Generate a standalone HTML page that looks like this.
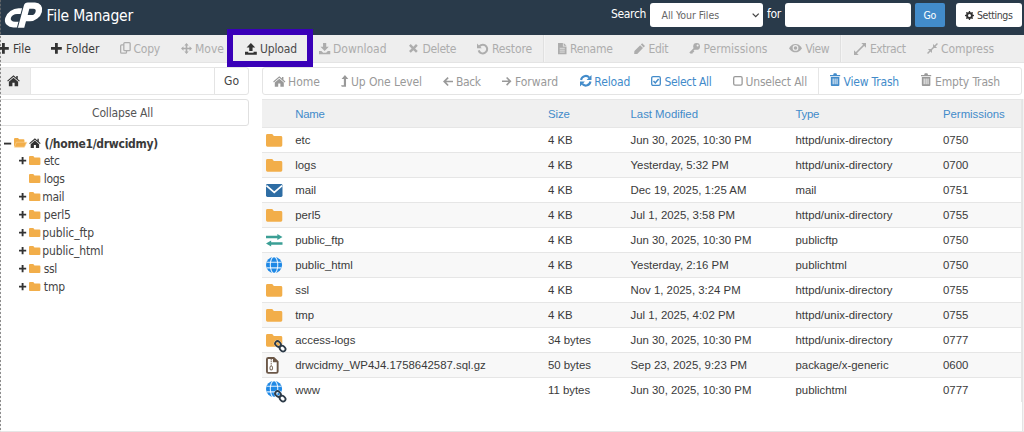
<!DOCTYPE html>
<html lang="en">
<head>
<meta charset="utf-8">
<title>File Manager</title>
<style>
*{box-sizing:border-box;margin:0;padding:0}
html,body{width:1024px;height:432px;overflow:hidden;background:#fff}
body{position:relative;font-family:"Liberation Sans",sans-serif;font-size:12px;color:#333}
.b{position:absolute}
.t{position:absolute;white-space:nowrap;line-height:16px;height:16px}
svg{position:absolute;overflow:visible}
#hdr{left:0;top:0;width:1024px;height:34.5px;background:#293a4a}
#tb{left:0;top:34.5px;width:1024px;height:28px;background:#eee;border-bottom:1px solid #e4e4e4}
.sep{position:absolute;top:35px;height:27px;width:1px;background:#e0e0e0;border-right:1px solid #f4f4f4;width:2px}
.row{position:absolute;left:261.5px;width:759.5px;height:25px;border-top:1px solid #e6e6e6}
.odd{background:#fff}
.even{background:#f8f8f8}
</style>
</head>
<body>
<div id="hdr" class="b"></div>
<div id="tb" class="b"></div>
<div class="sep" style="left:543px"></div>
<div class="sep" style="left:840px"></div>
<div class="b" style="left:650px;top:3px;width:113px;height:24px;background:#fff;border-radius:3px"></div>
<div class="b" style="left:785px;top:3px;width:126px;height:24px;background:#fff;border-radius:3px"></div>
<div class="b" style="left:914.5px;top:3px;width:30px;height:24px;background:#428bca;border-radius:2px"></div>
<div class="b" style="left:955.5px;top:3px;width:66px;height:24px;background:#fff;border-radius:3px"></div>
<div class="b" style="left:227px;top:29px;width:86.4px;height:37.8px;border:6.5px solid #3a00b8"></div>
<div class="b" style="left:0;top:67.3px;width:30.5px;height:27.4px;background:#eee;border:1px solid #e6e6e6;border-left:0"></div>
<div class="b" style="left:30px;top:67.3px;width:184.5px;height:27.4px;background:#fff;border:1px solid #e6e6e6"></div>
<div class="b" style="left:214px;top:67.3px;width:35px;height:27.4px;background:#fff;border:1px solid #e4e4e4;border-radius:0 3px 3px 0"></div>
<div class="b" style="left:-2px;top:98.5px;width:251px;height:27px;background:#fff;border:1px solid #e0e0e0;border-radius:3px"></div>
<div class="b" style="left:261.5px;top:67px;width:760.3px;height:28.4px;background:#fff;border:1px solid #e4e4e4;border-radius:3px"></div>
<div class="b" style="left:817.5px;top:68px;width:1px;height:26.4px;background:#e6e6e6"></div>
<div class="b" style="left:261.5px;top:99px;width:760px;height:333px;background:#fff;border:1px solid #e6e6e6"></div>
<div class="b" style="left:261.5px;top:99.5px;width:759.5px;height:27.5px;background:#f0f0f0"></div>
<div class="row odd" style="top:126.7px"></div>
<div class="row even" style="top:151.7px"></div>
<div class="row odd" style="top:176.7px"></div>
<div class="row even" style="top:201.7px"></div>
<div class="row odd" style="top:226.7px"></div>
<div class="row even" style="top:251.7px"></div>
<div class="row odd" style="top:276.7px"></div>
<div class="row even" style="top:301.7px"></div>
<div class="row odd" style="top:326.7px"></div>
<div class="row even" style="top:351.7px"></div>
<div class="row odd" style="top:376.7px"></div>

<div class="b" style="left:262px;top:401.7px;width:759.5px;height:29px;background:#fff"></div>
<div class="b" style="left:1021.5px;top:99px;width:2.5px;height:333px;background:#f3f3f3;border-left:1px solid #e4e4e4"></div>
<div class="b" style="left:0;top:431px;width:1024px;height:1px;background:#e6e6e6"></div>
<div class="b" style="left:0;top:0;width:1px;height:432px;background:repeating-linear-gradient(to bottom,rgba(112,112,112,.8) 0,rgba(112,112,112,.8) 2px,rgba(160,160,160,.12) 2px,rgba(160,160,160,.12) 4px)"></div>
<span class="t" style="left:46.5px;top:8.2px;font-family:'DejaVu Sans Condensed','Liberation Sans',sans-serif;font-size:15.5px;color:#fff;letter-spacing:-0.19px;">File Manager</span>
<span class="t" style="left:611.0px;top:5.5px;font-family:'DejaVu Sans Condensed','Liberation Sans',sans-serif;font-size:12px;color:#fff;letter-spacing:-0.35px;">Search</span>
<span class="t" style="left:661.5px;top:7.0px;font-family:'DejaVu Sans Condensed','Liberation Sans',sans-serif;font-size:10.5px;color:#666;letter-spacing:-0.06px;">All Your Files</span>
<span class="t" style="left:767.0px;top:5.5px;font-family:'DejaVu Sans Condensed','Liberation Sans',sans-serif;font-size:12px;color:#fff;letter-spacing:-0.28px;">for</span>
<span class="t" style="left:923.5px;top:7.0px;font-family:'DejaVu Sans Condensed','Liberation Sans',sans-serif;font-size:10.5px;color:#fff;letter-spacing:-0.30px;">Go</span>
<span class="t" style="left:977.0px;top:7.0px;font-family:'DejaVu Sans Condensed','Liberation Sans',sans-serif;font-size:10.5px;color:#444;letter-spacing:-0.41px;">Settings</span>
<span class="t" style="left:13.0px;top:40.8px;font-family:'DejaVu Sans Condensed','Liberation Sans',sans-serif;font-size:12px;color:#3b3b3b;letter-spacing:0.00px;">File</span>
<span class="t" style="left:66.0px;top:40.8px;font-family:'DejaVu Sans Condensed','Liberation Sans',sans-serif;font-size:12px;color:#3b3b3b;letter-spacing:0.03px;">Folder</span>
<span class="t" style="left:133.5px;top:40.8px;font-family:'DejaVu Sans Condensed','Liberation Sans',sans-serif;font-size:12px;color:#adadad;letter-spacing:-0.22px;">Copy</span>
<span class="t" style="left:195.0px;top:40.8px;font-family:'DejaVu Sans Condensed','Liberation Sans',sans-serif;font-size:12px;color:#adadad;letter-spacing:0.01px;">Move</span>
<span class="t" style="left:260.0px;top:40.8px;font-family:'DejaVu Sans Condensed','Liberation Sans',sans-serif;font-size:12px;color:#4a4a4a;letter-spacing:-0.14px;">Upload</span>
<span class="t" style="left:333.0px;top:40.8px;font-family:'DejaVu Sans Condensed','Liberation Sans',sans-serif;font-size:12px;color:#adadad;letter-spacing:-0.02px;">Download</span>
<span class="t" style="left:422.5px;top:40.8px;font-family:'DejaVu Sans Condensed','Liberation Sans',sans-serif;font-size:12px;color:#adadad;letter-spacing:-0.33px;">Delete</span>
<span class="t" style="left:492.0px;top:40.8px;font-family:'DejaVu Sans Condensed','Liberation Sans',sans-serif;font-size:12px;color:#adadad;letter-spacing:-0.13px;">Restore</span>
<span class="t" style="left:570.0px;top:40.8px;font-family:'DejaVu Sans Condensed','Liberation Sans',sans-serif;font-size:12px;color:#adadad;letter-spacing:-0.29px;">Rename</span>
<span class="t" style="left:648.5px;top:40.8px;font-family:'DejaVu Sans Condensed','Liberation Sans',sans-serif;font-size:12px;color:#adadad;letter-spacing:-0.35px;">Edit</span>
<span class="t" style="left:703.5px;top:40.8px;font-family:'DejaVu Sans Condensed','Liberation Sans',sans-serif;font-size:12px;color:#adadad;letter-spacing:0.02px;">Permissions</span>
<span class="t" style="left:805.5px;top:40.8px;font-family:'DejaVu Sans Condensed','Liberation Sans',sans-serif;font-size:12px;color:#adadad;letter-spacing:-0.52px;">View</span>
<span class="t" style="left:870.0px;top:40.8px;font-family:'DejaVu Sans Condensed','Liberation Sans',sans-serif;font-size:12px;color:#adadad;letter-spacing:-0.45px;">Extract</span>
<span class="t" style="left:941.0px;top:40.8px;font-family:'DejaVu Sans Condensed','Liberation Sans',sans-serif;font-size:12px;color:#adadad;letter-spacing:-0.07px;">Compress</span>
<span class="t" style="left:288.0px;top:73.5px;font-family:'DejaVu Sans Condensed','Liberation Sans',sans-serif;font-size:12px;color:#999;letter-spacing:0.03px;">Home</span>
<span class="t" style="left:351.0px;top:73.5px;font-family:'DejaVu Sans Condensed','Liberation Sans',sans-serif;font-size:12px;color:#999;letter-spacing:-0.09px;">Up One Level</span>
<span class="t" style="left:456.0px;top:73.5px;font-family:'DejaVu Sans Condensed','Liberation Sans',sans-serif;font-size:12px;color:#999;letter-spacing:-0.43px;">Back</span>
<span class="t" style="left:515.0px;top:73.5px;font-family:'DejaVu Sans Condensed','Liberation Sans',sans-serif;font-size:12px;color:#999;letter-spacing:-0.05px;">Forward</span>
<span class="t" style="left:594.3px;top:73.5px;font-family:'DejaVu Sans Condensed','Liberation Sans',sans-serif;font-size:12px;color:#428bca;letter-spacing:-0.13px;">Reload</span>
<span class="t" style="left:664.5px;top:73.5px;font-family:'DejaVu Sans Condensed','Liberation Sans',sans-serif;font-size:12px;color:#428bca;letter-spacing:-0.32px;">Select All</span>
<span class="t" style="left:745.5px;top:73.5px;font-family:'DejaVu Sans Condensed','Liberation Sans',sans-serif;font-size:12px;color:#999;letter-spacing:-0.18px;">Unselect All</span>
<span class="t" style="left:843.5px;top:73.5px;font-family:'DejaVu Sans Condensed','Liberation Sans',sans-serif;font-size:12px;color:#428bca;letter-spacing:-0.19px;">View Trash</span>
<span class="t" style="left:935.0px;top:73.5px;font-family:'DejaVu Sans Condensed','Liberation Sans',sans-serif;font-size:12px;color:#999;letter-spacing:-0.14px;">Empty Trash</span>
<span class="t" style="left:224.0px;top:72.6px;font-family:'DejaVu Sans Condensed','Liberation Sans',sans-serif;font-size:12px;color:#444;letter-spacing:0.01px;">Go</span>
<span class="t" style="left:92.0px;top:105.0px;font-family:'DejaVu Sans Condensed','Liberation Sans',sans-serif;font-size:12px;color:#555;letter-spacing:-0.14px;">Collapse All</span>
<span class="t" style="left:44.5px;top:135.6px;font-family:'DejaVu Sans Condensed','Liberation Sans',sans-serif;font-size:12px;color:#3a3a3a;font-weight:700;letter-spacing:-0.27px;">(/home1/drwcidmy)</span>
<span class="t" style="left:43.7px;top:152.8px;font-family:'DejaVu Sans Condensed','Liberation Sans',sans-serif;font-size:12px;color:#444;letter-spacing:-0.30px;">etc</span>
<span class="t" style="left:43.7px;top:170.8px;font-family:'DejaVu Sans Condensed','Liberation Sans',sans-serif;font-size:12px;color:#444;letter-spacing:-0.27px;">logs</span>
<span class="t" style="left:42.2px;top:188.8px;font-family:'DejaVu Sans Condensed','Liberation Sans',sans-serif;font-size:12px;color:#444;letter-spacing:-0.26px;">mail</span>
<span class="t" style="left:43.7px;top:206.8px;font-family:'DejaVu Sans Condensed','Liberation Sans',sans-serif;font-size:12px;color:#444;letter-spacing:-0.14px;">perl5</span>
<span class="t" style="left:42.2px;top:224.8px;font-family:'DejaVu Sans Condensed','Liberation Sans',sans-serif;font-size:12px;color:#444;letter-spacing:-0.08px;">public_ftp</span>
<span class="t" style="left:42.2px;top:242.8px;font-family:'DejaVu Sans Condensed','Liberation Sans',sans-serif;font-size:12px;color:#444;letter-spacing:-0.12px;">public_html</span>
<span class="t" style="left:43.7px;top:260.8px;font-family:'DejaVu Sans Condensed','Liberation Sans',sans-serif;font-size:12px;color:#444;letter-spacing:-0.32px;">ssl</span>
<span class="t" style="left:43.7px;top:278.8px;font-family:'DejaVu Sans Condensed','Liberation Sans',sans-serif;font-size:12px;color:#444;letter-spacing:-0.04px;">tmp</span>
<span class="t" style="left:295.2px;top:106.0px;font-family:'Liberation Sans',sans-serif;font-size:11.4px;color:#428bca;letter-spacing:-0.22px;">Name</span>
<span class="t" style="left:548.1px;top:106.0px;font-family:'Liberation Sans',sans-serif;font-size:11.4px;color:#428bca;letter-spacing:-0.17px;">Size</span>
<span class="t" style="left:630.5px;top:106.0px;font-family:'Liberation Sans',sans-serif;font-size:11.4px;color:#428bca;letter-spacing:-0.02px;">Last Modified</span>
<span class="t" style="left:795.5px;top:106.0px;font-family:'Liberation Sans',sans-serif;font-size:11.4px;color:#428bca;letter-spacing:-0.30px;">Type</span>
<span class="t" style="left:943.0px;top:106.0px;font-family:'Liberation Sans',sans-serif;font-size:11.4px;color:#428bca;letter-spacing:-0.03px;">Permissions</span>
<span class="t" style="left:295.2px;top:131.8px;font-family:'Liberation Sans',sans-serif;font-size:11.4px;color:#3a3a3a;">etc</span>
<span class="t" style="left:547.9px;top:131.8px;font-family:'Liberation Sans',sans-serif;font-size:11.4px;color:#3a3a3a;">4 KB</span>
<span class="t" style="left:630.5px;top:131.8px;font-family:'Liberation Sans',sans-serif;font-size:11.4px;color:#3a3a3a;">Jun 30, 2025, 10:30 PM</span>
<span class="t" style="left:795.5px;top:131.8px;font-family:'Liberation Sans',sans-serif;font-size:11.4px;color:#3a3a3a;">httpd/unix-directory</span>
<span class="t" style="left:943.0px;top:131.8px;font-family:'Liberation Sans',sans-serif;font-size:11.4px;color:#3a3a3a;">0750</span>
<span class="t" style="left:295.2px;top:156.8px;font-family:'Liberation Sans',sans-serif;font-size:11.4px;color:#3a3a3a;">logs</span>
<span class="t" style="left:547.9px;top:156.8px;font-family:'Liberation Sans',sans-serif;font-size:11.4px;color:#3a3a3a;">4 KB</span>
<span class="t" style="left:630.5px;top:156.8px;font-family:'Liberation Sans',sans-serif;font-size:11.4px;color:#3a3a3a;">Yesterday, 5:32 PM</span>
<span class="t" style="left:795.5px;top:156.8px;font-family:'Liberation Sans',sans-serif;font-size:11.4px;color:#3a3a3a;">httpd/unix-directory</span>
<span class="t" style="left:943.0px;top:156.8px;font-family:'Liberation Sans',sans-serif;font-size:11.4px;color:#3a3a3a;">0700</span>
<span class="t" style="left:295.2px;top:181.8px;font-family:'Liberation Sans',sans-serif;font-size:11.4px;color:#3a3a3a;">mail</span>
<span class="t" style="left:547.9px;top:181.8px;font-family:'Liberation Sans',sans-serif;font-size:11.4px;color:#3a3a3a;">4 KB</span>
<span class="t" style="left:630.5px;top:181.8px;font-family:'Liberation Sans',sans-serif;font-size:11.4px;color:#3a3a3a;">Dec 19, 2025, 1:25 AM</span>
<span class="t" style="left:795.5px;top:181.8px;font-family:'Liberation Sans',sans-serif;font-size:11.4px;color:#3a3a3a;">mail</span>
<span class="t" style="left:943.0px;top:181.8px;font-family:'Liberation Sans',sans-serif;font-size:11.4px;color:#3a3a3a;">0751</span>
<span class="t" style="left:295.2px;top:206.8px;font-family:'Liberation Sans',sans-serif;font-size:11.4px;color:#3a3a3a;">perl5</span>
<span class="t" style="left:547.9px;top:206.8px;font-family:'Liberation Sans',sans-serif;font-size:11.4px;color:#3a3a3a;">4 KB</span>
<span class="t" style="left:630.5px;top:206.8px;font-family:'Liberation Sans',sans-serif;font-size:11.4px;color:#3a3a3a;">Jul 1, 2025, 3:58 PM</span>
<span class="t" style="left:795.5px;top:206.8px;font-family:'Liberation Sans',sans-serif;font-size:11.4px;color:#3a3a3a;">httpd/unix-directory</span>
<span class="t" style="left:943.0px;top:206.8px;font-family:'Liberation Sans',sans-serif;font-size:11.4px;color:#3a3a3a;">0755</span>
<span class="t" style="left:295.2px;top:231.8px;font-family:'Liberation Sans',sans-serif;font-size:11.4px;color:#3a3a3a;">public_ftp</span>
<span class="t" style="left:547.9px;top:231.8px;font-family:'Liberation Sans',sans-serif;font-size:11.4px;color:#3a3a3a;">4 KB</span>
<span class="t" style="left:630.5px;top:231.8px;font-family:'Liberation Sans',sans-serif;font-size:11.4px;color:#3a3a3a;">Jun 30, 2025, 10:30 PM</span>
<span class="t" style="left:795.5px;top:231.8px;font-family:'Liberation Sans',sans-serif;font-size:11.4px;color:#3a3a3a;">publicftp</span>
<span class="t" style="left:943.0px;top:231.8px;font-family:'Liberation Sans',sans-serif;font-size:11.4px;color:#3a3a3a;">0750</span>
<span class="t" style="left:295.2px;top:256.8px;font-family:'Liberation Sans',sans-serif;font-size:11.4px;color:#3a3a3a;">public_html</span>
<span class="t" style="left:547.9px;top:256.8px;font-family:'Liberation Sans',sans-serif;font-size:11.4px;color:#3a3a3a;">4 KB</span>
<span class="t" style="left:630.5px;top:256.8px;font-family:'Liberation Sans',sans-serif;font-size:11.4px;color:#3a3a3a;">Yesterday, 2:16 PM</span>
<span class="t" style="left:795.5px;top:256.8px;font-family:'Liberation Sans',sans-serif;font-size:11.4px;color:#3a3a3a;">publichtml</span>
<span class="t" style="left:943.0px;top:256.8px;font-family:'Liberation Sans',sans-serif;font-size:11.4px;color:#3a3a3a;">0750</span>
<span class="t" style="left:295.2px;top:281.8px;font-family:'Liberation Sans',sans-serif;font-size:11.4px;color:#3a3a3a;">ssl</span>
<span class="t" style="left:547.9px;top:281.8px;font-family:'Liberation Sans',sans-serif;font-size:11.4px;color:#3a3a3a;">4 KB</span>
<span class="t" style="left:630.5px;top:281.8px;font-family:'Liberation Sans',sans-serif;font-size:11.4px;color:#3a3a3a;">Nov 1, 2025, 3:24 PM</span>
<span class="t" style="left:795.5px;top:281.8px;font-family:'Liberation Sans',sans-serif;font-size:11.4px;color:#3a3a3a;">httpd/unix-directory</span>
<span class="t" style="left:943.0px;top:281.8px;font-family:'Liberation Sans',sans-serif;font-size:11.4px;color:#3a3a3a;">0755</span>
<span class="t" style="left:295.2px;top:306.8px;font-family:'Liberation Sans',sans-serif;font-size:11.4px;color:#3a3a3a;">tmp</span>
<span class="t" style="left:547.9px;top:306.8px;font-family:'Liberation Sans',sans-serif;font-size:11.4px;color:#3a3a3a;">4 KB</span>
<span class="t" style="left:630.5px;top:306.8px;font-family:'Liberation Sans',sans-serif;font-size:11.4px;color:#3a3a3a;">Jul 1, 2025, 4:02 PM</span>
<span class="t" style="left:795.5px;top:306.8px;font-family:'Liberation Sans',sans-serif;font-size:11.4px;color:#3a3a3a;">httpd/unix-directory</span>
<span class="t" style="left:943.0px;top:306.8px;font-family:'Liberation Sans',sans-serif;font-size:11.4px;color:#3a3a3a;">0755</span>
<span class="t" style="left:295.2px;top:331.8px;font-family:'Liberation Sans',sans-serif;font-size:11.4px;color:#3a3a3a;">access-logs</span>
<span class="t" style="left:547.9px;top:331.8px;font-family:'Liberation Sans',sans-serif;font-size:11.4px;color:#3a3a3a;">34 bytes</span>
<span class="t" style="left:630.5px;top:331.8px;font-family:'Liberation Sans',sans-serif;font-size:11.4px;color:#3a3a3a;">Jun 30, 2025, 10:30 PM</span>
<span class="t" style="left:795.5px;top:331.8px;font-family:'Liberation Sans',sans-serif;font-size:11.4px;color:#3a3a3a;">httpd/unix-directory</span>
<span class="t" style="left:943.0px;top:331.8px;font-family:'Liberation Sans',sans-serif;font-size:11.4px;color:#3a3a3a;">0777</span>
<span class="t" style="left:295.2px;top:356.8px;font-family:'Liberation Sans',sans-serif;font-size:11.4px;color:#3a3a3a;">drwcidmy_WP4J4.1758642587.sql.gz</span>
<span class="t" style="left:547.9px;top:356.8px;font-family:'Liberation Sans',sans-serif;font-size:11.4px;color:#3a3a3a;">50 bytes</span>
<span class="t" style="left:630.5px;top:356.8px;font-family:'Liberation Sans',sans-serif;font-size:11.4px;color:#3a3a3a;">Sep 23, 2025, 9:23 PM</span>
<span class="t" style="left:795.5px;top:356.8px;font-family:'Liberation Sans',sans-serif;font-size:11.4px;color:#3a3a3a;">package/x-generic</span>
<span class="t" style="left:943.0px;top:356.8px;font-family:'Liberation Sans',sans-serif;font-size:11.4px;color:#3a3a3a;">0600</span>
<span class="t" style="left:295.2px;top:381.8px;font-family:'Liberation Sans',sans-serif;font-size:11.4px;color:#3a3a3a;">www</span>
<span class="t" style="left:547.9px;top:381.8px;font-family:'Liberation Sans',sans-serif;font-size:11.4px;color:#3a3a3a;">11 bytes</span>
<span class="t" style="left:630.5px;top:381.8px;font-family:'Liberation Sans',sans-serif;font-size:11.4px;color:#3a3a3a;">Jun 30, 2025, 10:30 PM</span>
<span class="t" style="left:795.5px;top:381.8px;font-family:'Liberation Sans',sans-serif;font-size:11.4px;color:#3a3a3a;">publichtml</span>
<span class="t" style="left:943.0px;top:381.8px;font-family:'Liberation Sans',sans-serif;font-size:11.4px;color:#3a3a3a;">0777</span>
<svg style="left:0;top:0" width="64" height="36" viewBox="0 0 768 432"><g fill="none" stroke-linejoin="round" transform="translate(58 0) skewX(-15)">
<path d="M256 134 H192 A96 81 0 0 0 192 296 H248" stroke="#fff" stroke-width="68"/>
<path d="M284 332 V68 H370 A75 75 0 0 1 370 218 H318" stroke="#293a4a" stroke-width="102"/>
<path d="M284 332 V68 H370 A75 75 0 0 1 370 218 H318" stroke="#fff" stroke-width="76"/>
</g></svg>
<svg style="left:752.00px;top:12.69px" width="7.40" height="4.62" viewBox="0 0 8 5"><path d="M0.7 0.7 L4 4 L7.3 0.7" fill="none" stroke="#444" stroke-width="1.4"/></svg>
<svg style="left:964.80px;top:11.00px" width="9.00" height="9.00" viewBox="0 0 12 12"><path d="M11.97 5.41 L11.97 6.59 L10.31 7.31 L9.97 8.12 L10.64 9.81 L9.81 10.64 L8.12 9.97 L7.31 10.31 L6.59 11.97 L5.41 11.97 L4.69 10.31 L3.88 9.97 L2.19 10.64 L1.36 9.81 L2.03 8.12 L1.69 7.31 L0.03 6.59 L0.03 5.41 L1.69 4.69 L2.03 3.88 L1.36 2.19 L2.19 1.36 L3.88 2.03 L4.69 1.69 L5.41 0.03 L6.59 0.03 L7.31 1.69 L8.12 2.03 L9.81 1.36 L10.64 2.19 L9.97 3.88 L10.31 4.69Z" fill="#333" /><circle cx="6" cy="6" r="2" fill="#fff"/></svg>
<svg style="left:-1.60px;top:43.20px" width="10.80" height="10.80" viewBox="0 0 10 10"><path d="M3.7 0h2.6v3.7H10v2.6H6.3V10H3.7V6.3H0V3.7h3.7z" fill="#333" /></svg>
<svg style="left:51.40px;top:43.20px" width="10.80" height="10.80" viewBox="0 0 10 10"><path d="M3.7 0h2.6v3.7H10v2.6H6.3V10H3.7V6.3H0V3.7h3.7z" fill="#333" /></svg>
<svg style="left:120.00px;top:42.41px" width="10.80" height="11.78" viewBox="0 0 11 12"><rect x="0.65" y="3" width="6" height="8.35" rx="1" fill="none" stroke="#adadad" stroke-width="1.3"/><rect x="3.9" y="0.65" width="6.45" height="8.2" rx="1" fill="#eee" stroke="#adadad" stroke-width="1.3"/></svg>
<svg style="left:181.00px;top:43.00px" width="11.00" height="11.00" viewBox="0 0 12 12"><path d="M6 0 L8.4 2.7 H6.9 V5.1 H9.3 V3.6 L12 6 L9.3 8.4 V6.9 H6.9 V9.3 H8.4 L6 12 L3.6 9.3 H5.1 V6.9 H2.7 V8.4 L0 6 L2.7 3.6 V5.1 H5.1 V2.7 H3.6 Z" fill="#adadad" /></svg>
<svg style="left:244.70px;top:42.60px" width="11.80" height="11.80" viewBox="0 0 12 12"><path d="M6 0 L10.4 4.6 H7.7 V8.2 H4.3 V4.6 H1.6 Z M0 8.8 H3.3 V9.9 H8.7 V8.8 H12 V12 H0 Z" fill="#333" /></svg>
<svg style="left:318.75px;top:42.88px" width="11.25" height="11.25" viewBox="0 0 12 12"><path d="M4.3 0 H7.7 V3.9 H10.4 L6 8.6 L1.6 3.9 H4.3 Z M0 8.6 H2.6 L4.4 10.4 H7.6 L9.4 8.6 H12 V12 H0 Z" fill="#adadad" /></svg>
<svg style="left:408.75px;top:44.12px" width="8.75" height="8.75" viewBox="0 0 10 10"><path d="M2 0 L5 3 L8 0 L10 2 L7 5 L10 8 L8 10 L5 7 L2 10 L0 8 L3 5 L0 2 Z" fill="#adadad" /></svg>
<svg style="left:477.00px;top:42.50px" width="11.60" height="11.60" viewBox="0 0 12 12"><path d="M2.6 3.4 A4.5 4.5 0 1 1 1.7 7.6" fill="none" stroke="#adadad" stroke-width="2.1"/><path d="M0 0.4 V5.4 H5 Z" fill="#adadad" /></svg>
<svg style="left:557.50px;top:42.83px" width="8.50" height="11.33" viewBox="0 0 9 12"><path d="M0 0 H5.2 V3.8 H9 V12 H0 Z M6 0 L9 3 H6 Z" fill="#adadad" /><path d="M1.8 5.6H7.2M1.8 7.6H7.2M1.8 9.6H7.2" stroke="#eee" stroke-width="0.8"/></svg>
<svg style="left:633.75px;top:42.88px" width="11.25" height="11.25" viewBox="0 0 12 12"><path d="M8.7 0.3 L11.7 3.3 L10.3 4.7 L7.3 1.7 Z M6.6 2.4 L9.6 5.4 L3.4 11.6 L0.2 11.8 L0.4 8.6 Z" fill="#adadad" /></svg>
<svg style="left:689.00px;top:43.00px" width="11.00" height="11.00" viewBox="0 0 12 12"><circle cx="8.3" cy="3.7" r="3.7" fill="#adadad"/><circle cx="9.4" cy="2.6" r="1.1" fill="#eee"/><path d="M6.2 5.8 L1 11 M2.2 9.6 L3.8 11.2 M3.8 8.2 L5.2 9.6" stroke="#adadad" stroke-width="1.9" fill="none"/></svg>
<svg style="left:789.00px;top:44.32px" width="13.00" height="8.36" viewBox="0 0 14 9"><path d="M0 4.5 C2.2 1 4.6 0 7 0 S11.8 1 14 4.5 C11.8 8 9.4 9 7 9 S2.2 8 0 4.5Z" fill="#adadad" /><circle cx="7" cy="4.3" r="3.1" fill="#eee"/><circle cx="7" cy="4.3" r="1.9" fill="#adadad"/></svg>
<svg style="left:854.00px;top:42.50px" width="12.00" height="12.00" viewBox="0 0 12 12"><path d="M2 10 L10 2" stroke="#adadad" stroke-width="1.7" fill="none"/><path d="M7.3 0 H12 V4.7 Z M0 7.3 V12 H4.7 Z" fill="#adadad" /></svg>
<svg style="left:927.00px;top:43.00px" width="11.00" height="11.00" viewBox="0 0 12 12"><path d="M0.6 11.4 L11.4 0.6" stroke="#adadad" stroke-width="1.6" fill="none"/><path d="M6.6 5.4 V1 L11 5.4 Z M5.4 6.6 V11 L1 6.6 Z" fill="#adadad" /></svg>
<svg style="left:272.60px;top:75.60px" width="12.60" height="10.80" viewBox="0 0 14 12"><path d="M7 0.4 L0.2 6.2 L1 7.1 L7 2 L13 7.1 L13.8 6.2 L11.6 4.3 V1 H10 V2.9 Z M7 3 L2 7.3 V12 H5.8 V8.4 H8.2 V12 H12 V7.3 Z" fill="#999" /></svg>
<svg style="left:341.00px;top:75.28px" width="7.30" height="11.84" viewBox="0 0 7.4 12"><path d="M4 0 L7.4 4.1 H5.1 V12 H0.8 L0 10.3 H2.9 V4.1 H0.6 Z" fill="#999" /></svg>
<svg style="left:442.50px;top:76.95px" width="10.00" height="9.09" viewBox="0 0 11 10"><path d="M5 0 L6.3 1.3 L3.5 4.1 H11 V5.9 H3.5 L6.3 8.7 L5 10 L0 5 Z" fill="#999" /></svg>
<svg style="left:502.00px;top:77.18px" width="9.50" height="8.64" viewBox="0 0 11 10"><path d="M6 0 L4.7 1.3 L7.5 4.1 H0 V5.9 H7.5 L4.7 8.7 L6 10 L11 5 Z" fill="#999" /></svg>
<svg style="left:579.50px;top:75.45px" width="11.50" height="11.50" viewBox="0 0 12 12"><path d="M1.1 5.2 A5 5 0 0 1 9.6 2.5 M10.9 6.8 A5 5 0 0 1 2.4 9.5" fill="none" stroke="#428bca" stroke-width="2.2"/><path d="M12 0 V5.1 H6.9 Z M0 12 V6.9 H5.1 Z" fill="#428bca" /></svg>
<svg style="left:651.00px;top:76.00px" width="10.00" height="10.00" viewBox="0 0 10 10"><rect x="0.7" y="0.7" width="8.6" height="8.6" rx="1.3" fill="none" stroke="#428bca" stroke-width="1.3"/><path d="M2.5 5 L4.3 6.9 L7.6 3" fill="none" stroke="#428bca" stroke-width="1.5"/></svg>
<svg style="left:732.50px;top:76.10px" width="9.80" height="9.80" viewBox="0 0 10 10"><rect x="0.7" y="0.7" width="8.6" height="8.6" rx="1.4" fill="none" stroke="#999" stroke-width="1.3"/></svg>
<svg style="left:830.00px;top:73.40px" width="10.20" height="13.00" viewBox="0 0 11 12" preserveAspectRatio="none"><path d="M0 1.9 H3.4 L4.1 0.3 H6.9 L7.6 1.9 H11 V3.1 H0 Z M0.9 3.8 H10.1 V11 Q10.1 12 9.1 12 H1.9 Q0.9 12 0.9 11 Z M2.9 5 v5.4 h1 v-5.4z M5 5 v5.4 h1 v-5.4z M7.1 5 v5.4 h1 v-5.4z" fill="#428bca" fill-rule="evenodd"/></svg>
<svg style="left:921.00px;top:73.40px" width="10.20" height="13.00" viewBox="0 0 11 12" preserveAspectRatio="none"><path d="M0 1.9 H3.4 L4.1 0.3 H6.9 L7.6 1.9 H11 V3.1 H0 Z M0.9 3.8 H10.1 V11 Q10.1 12 9.1 12 H1.9 Q0.9 12 0.9 11 Z M2.9 5 v5.4 h1 v-5.4z M5 5 v5.4 h1 v-5.4z M7.1 5 v5.4 h1 v-5.4z" fill="#999" fill-rule="evenodd"/></svg>
<svg style="left:6.70px;top:74.93px" width="13.00" height="11.14" viewBox="0 0 14 12"><path d="M7 0.4 L0.2 6.2 L1 7.1 L7 2 L13 7.1 L13.8 6.2 L11.6 4.3 V1 H10 V2.9 Z M7 3 L2 7.3 V12 H5.8 V8.4 H8.2 V12 H12 V7.3 Z" fill="#333" /></svg>
<svg style="left:4.00px;top:139.70px" width="7.20" height="7.20" viewBox="0 0 10 10"><path d="M0 3.7H10V6.3H0z" fill="#333" /></svg>
<svg style="left:13.70px;top:138.03px" width="12.80" height="9.14" viewBox="0 0 14 10"><path d="M0 1.2 Q0 0 1.2 0 H4.4 L5.6 1.3 H10.4 Q11.4 1.3 11.4 2.3 V9 H0 Z" fill="#f2ae4a" /><path d="M2.6 4.6 H14 L11.4 10 H0.4 Z" fill="#f2ae4a" stroke="#f8d49c" stroke-width="0.7"/></svg>
<svg style="left:29.20px;top:137.54px" width="11.80" height="10.11" viewBox="0 0 14 12"><path d="M7 0.4 L0.2 6.2 L1 7.1 L7 2 L13 7.1 L13.8 6.2 L11.6 4.3 V1 H10 V2.9 Z M7 3 L2 7.3 V12 H5.8 V8.4 H8.2 V12 H12 V7.3 Z" fill="#333" /></svg>
<svg style="left:18.80px;top:157.20px" width="7.20" height="7.20" viewBox="0 0 10 10"><path d="M3.7 0h2.6v3.7H10v2.6H6.3V10H3.7V6.3H0V3.7h3.7z" fill="#333" /></svg>
<svg style="left:28.60px;top:156.15px" width="11.40" height="8.91" viewBox="0 0 16 12.5"><path d="M0 1.4 Q0 0 1.4 0 H5.6 Q6.5 0 7 0.9 L7.6 2 H14.6 Q16 2 16 3.4 V11.1 Q16 12.5 14.6 12.5 H1.4 Q0 12.5 0 11.1 Z" fill="#f2ae4a" /></svg>
<svg style="left:28.60px;top:174.15px" width="11.40" height="8.91" viewBox="0 0 16 12.5"><path d="M0 1.4 Q0 0 1.4 0 H5.6 Q6.5 0 7 0.9 L7.6 2 H14.6 Q16 2 16 3.4 V11.1 Q16 12.5 14.6 12.5 H1.4 Q0 12.5 0 11.1 Z" fill="#f2ae4a" /></svg>
<svg style="left:18.80px;top:193.20px" width="7.20" height="7.20" viewBox="0 0 10 10"><path d="M3.7 0h2.6v3.7H10v2.6H6.3V10H3.7V6.3H0V3.7h3.7z" fill="#333" /></svg>
<svg style="left:28.60px;top:192.15px" width="11.40" height="8.91" viewBox="0 0 16 12.5"><path d="M0 1.4 Q0 0 1.4 0 H5.6 Q6.5 0 7 0.9 L7.6 2 H14.6 Q16 2 16 3.4 V11.1 Q16 12.5 14.6 12.5 H1.4 Q0 12.5 0 11.1 Z" fill="#f2ae4a" /></svg>
<svg style="left:18.80px;top:211.20px" width="7.20" height="7.20" viewBox="0 0 10 10"><path d="M3.7 0h2.6v3.7H10v2.6H6.3V10H3.7V6.3H0V3.7h3.7z" fill="#333" /></svg>
<svg style="left:28.60px;top:210.15px" width="11.40" height="8.91" viewBox="0 0 16 12.5"><path d="M0 1.4 Q0 0 1.4 0 H5.6 Q6.5 0 7 0.9 L7.6 2 H14.6 Q16 2 16 3.4 V11.1 Q16 12.5 14.6 12.5 H1.4 Q0 12.5 0 11.1 Z" fill="#f2ae4a" /></svg>
<svg style="left:18.80px;top:229.20px" width="7.20" height="7.20" viewBox="0 0 10 10"><path d="M3.7 0h2.6v3.7H10v2.6H6.3V10H3.7V6.3H0V3.7h3.7z" fill="#333" /></svg>
<svg style="left:28.60px;top:228.15px" width="11.40" height="8.91" viewBox="0 0 16 12.5"><path d="M0 1.4 Q0 0 1.4 0 H5.6 Q6.5 0 7 0.9 L7.6 2 H14.6 Q16 2 16 3.4 V11.1 Q16 12.5 14.6 12.5 H1.4 Q0 12.5 0 11.1 Z" fill="#f2ae4a" /></svg>
<svg style="left:18.80px;top:247.20px" width="7.20" height="7.20" viewBox="0 0 10 10"><path d="M3.7 0h2.6v3.7H10v2.6H6.3V10H3.7V6.3H0V3.7h3.7z" fill="#333" /></svg>
<svg style="left:28.60px;top:246.15px" width="11.40" height="8.91" viewBox="0 0 16 12.5"><path d="M0 1.4 Q0 0 1.4 0 H5.6 Q6.5 0 7 0.9 L7.6 2 H14.6 Q16 2 16 3.4 V11.1 Q16 12.5 14.6 12.5 H1.4 Q0 12.5 0 11.1 Z" fill="#f2ae4a" /></svg>
<svg style="left:18.80px;top:265.20px" width="7.20" height="7.20" viewBox="0 0 10 10"><path d="M3.7 0h2.6v3.7H10v2.6H6.3V10H3.7V6.3H0V3.7h3.7z" fill="#333" /></svg>
<svg style="left:28.60px;top:264.15px" width="11.40" height="8.91" viewBox="0 0 16 12.5"><path d="M0 1.4 Q0 0 1.4 0 H5.6 Q6.5 0 7 0.9 L7.6 2 H14.6 Q16 2 16 3.4 V11.1 Q16 12.5 14.6 12.5 H1.4 Q0 12.5 0 11.1 Z" fill="#f2ae4a" /></svg>
<svg style="left:18.80px;top:283.20px" width="7.20" height="7.20" viewBox="0 0 10 10"><path d="M3.7 0h2.6v3.7H10v2.6H6.3V10H3.7V6.3H0V3.7h3.7z" fill="#333" /></svg>
<svg style="left:28.60px;top:282.15px" width="11.40" height="8.91" viewBox="0 0 16 12.5"><path d="M0 1.4 Q0 0 1.4 0 H5.6 Q6.5 0 7 0.9 L7.6 2 H14.6 Q16 2 16 3.4 V11.1 Q16 12.5 14.6 12.5 H1.4 Q0 12.5 0 11.1 Z" fill="#f2ae4a" /></svg>
<svg style="left:266.00px;top:133.93px" width="16.30" height="12.73" viewBox="0 0 16 12.5"><path d="M0 1.4 Q0 0 1.4 0 H5.6 Q6.5 0 7 0.9 L7.6 2 H14.6 Q16 2 16 3.4 V11.1 Q16 12.5 14.6 12.5 H1.4 Q0 12.5 0 11.1 Z" fill="#f2ae4a" /></svg>
<svg style="left:266.00px;top:158.93px" width="16.30" height="12.73" viewBox="0 0 16 12.5"><path d="M0 1.4 Q0 0 1.4 0 H5.6 Q6.5 0 7 0.9 L7.6 2 H14.6 Q16 2 16 3.4 V11.1 Q16 12.5 14.6 12.5 H1.4 Q0 12.5 0 11.1 Z" fill="#f2ae4a" /></svg>
<svg style="left:266.00px;top:183.85px" width="16.50" height="12.89" viewBox="0 0 16 12.5"><rect x="0" y="0" width="16" height="12.5" rx="1.4" fill="#2e6da4"/><path d="M0.4 1.6 L8 8.2 L15.6 1.6" fill="none" stroke="#fff" stroke-width="1.7"/></svg>
<svg style="left:266.00px;top:208.93px" width="16.30" height="12.73" viewBox="0 0 16 12.5"><path d="M0 1.4 Q0 0 1.4 0 H5.6 Q6.5 0 7 0.9 L7.6 2 H14.6 Q16 2 16 3.4 V11.1 Q16 12.5 14.6 12.5 H1.4 Q0 12.5 0 11.1 Z" fill="#f2ae4a" /></svg>
<svg style="left:266.00px;top:234.06px" width="16.50" height="12.48" viewBox="0 0 16 12.1"><path d="M0 1.7 H11 V0 L16 2.9 L11 5.8 V4.1 H0 Z M16 8 H5 V6.3 L0 9.2 L5 12.1 V10.4 H16 Z" fill="#3b9f95" /></svg>
<svg style="left:266.20px;top:257.05px" width="16.10" height="16.10" viewBox="0 0 16 16"><circle cx="8" cy="8" r="8" fill="#1e88e5"/><g fill="none" stroke="#fff" stroke-width="1.1" stroke-opacity="0.85"><ellipse cx="8" cy="8" rx="3.7" ry="8.4"/><path d="M0.5 5.2H15.5M0.5 10.8H15.5"/></g></svg>
<svg style="left:266.00px;top:283.93px" width="16.30" height="12.73" viewBox="0 0 16 12.5"><path d="M0 1.4 Q0 0 1.4 0 H5.6 Q6.5 0 7 0.9 L7.6 2 H14.6 Q16 2 16 3.4 V11.1 Q16 12.5 14.6 12.5 H1.4 Q0 12.5 0 11.1 Z" fill="#f2ae4a" /></svg>
<svg style="left:266.00px;top:308.93px" width="16.30" height="12.73" viewBox="0 0 16 12.5"><path d="M0 1.4 Q0 0 1.4 0 H5.6 Q6.5 0 7 0.9 L7.6 2 H14.6 Q16 2 16 3.4 V11.1 Q16 12.5 14.6 12.5 H1.4 Q0 12.5 0 11.1 Z" fill="#f2ae4a" /></svg>
<svg style="left:266.00px;top:333.93px" width="16.30" height="12.73" viewBox="0 0 16 12.5"><path d="M0 1.4 Q0 0 1.4 0 H5.6 Q6.5 0 7 0.9 L7.6 2 H14.6 Q16 2 16 3.4 V11.1 Q16 12.5 14.6 12.5 H1.4 Q0 12.5 0 11.1 Z" fill="#f2ae4a" /></svg>
<svg style="left:272.90px;top:338.50px" width="15" height="15" viewBox="-5 -5 15 15"><g fill="none"><g stroke="#fff" stroke-width="2.9"><rect x="-3.1" y="-2.4" width="6.2" height="4.8" rx="2.4" transform="translate(4.6 4.6) rotate(45)"/></g><g stroke="#fff" stroke-width="2.5" stroke-opacity="0.55"><rect x="-3.1" y="-2.4" width="6.2" height="4.8" rx="2.4" transform="rotate(45)"/></g><g stroke="#2c3a47" stroke-width="1.75"><rect x="-3.1" y="-2.4" width="6.2" height="4.8" rx="2.4" transform="rotate(45)"/><rect x="-3.1" y="-2.4" width="6.2" height="4.8" rx="2.4" transform="translate(4.6 4.6) rotate(45)"/></g></g></svg>
<svg style="left:266.10px;top:357.00px" width="12.60" height="16.80" viewBox="0 0 12 16"><path d="M2.2 0.9 H7.4 L11.1 4.4 V13.8 Q11.1 15.1 9.8 15.1 H2.2 Q0.9 15.1 0.9 13.8 V2.2 Q0.9 0.9 2.2 0.9 Z" fill="#fff" stroke="#6b5747" stroke-width="1.8" stroke-linejoin="round"/><path d="M6.6 0.9 H7.4 L11.1 4.4 V5 H6.6 Z" fill="#6b5747"/><path d="M5 1.8V8.4" stroke="#6b5747" stroke-width="1.1" stroke-opacity="0.75" stroke-dasharray="1.2 0.6"/><ellipse cx="5" cy="10.4" rx="1.3" ry="1.9" fill="none" stroke="#6b5747" stroke-width="1" stroke-opacity="0.85"/></svg>
<svg style="left:266.20px;top:381.45px" width="16.10" height="16.10" viewBox="0 0 16 16"><circle cx="8" cy="8" r="8" fill="#1e88e5"/><g fill="none" stroke="#fff" stroke-width="1.1" stroke-opacity="0.85"><ellipse cx="8" cy="8" rx="3.7" ry="8.4"/><path d="M0.5 5.2H15.5M0.5 10.8H15.5"/></g></svg>
<svg style="left:272.90px;top:389.10px" width="15" height="15" viewBox="-5 -5 15 15"><g fill="none"><g stroke="#fff" stroke-width="2.9"><rect x="-3.1" y="-2.4" width="6.2" height="4.8" rx="2.4" transform="translate(4.6 4.6) rotate(45)"/></g><g stroke="#fff" stroke-width="2.5" stroke-opacity="0.55"><rect x="-3.1" y="-2.4" width="6.2" height="4.8" rx="2.4" transform="rotate(45)"/></g><g stroke="#2c3a47" stroke-width="1.75"><rect x="-3.1" y="-2.4" width="6.2" height="4.8" rx="2.4" transform="rotate(45)"/><rect x="-3.1" y="-2.4" width="6.2" height="4.8" rx="2.4" transform="translate(4.6 4.6) rotate(45)"/></g></g></svg>
</body>
</html>
